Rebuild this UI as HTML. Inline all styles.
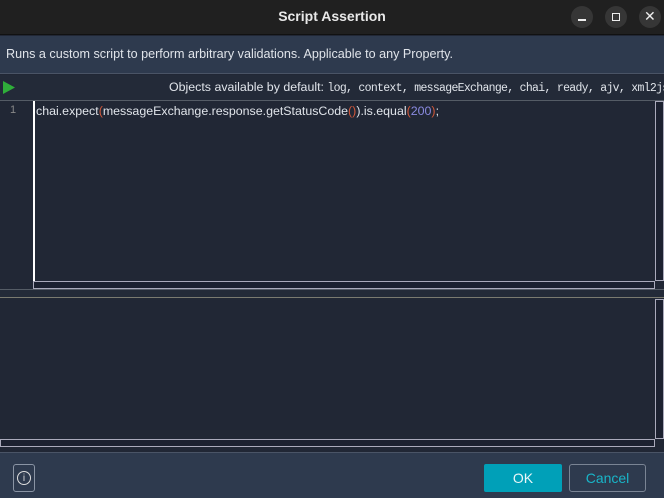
<!DOCTYPE html><html><head><style>
body{margin:0;width:664px;height:498px;overflow:hidden;background:#212735;font-family:"Liberation Sans",sans-serif;position:relative}
div{position:absolute;box-sizing:border-box}
.mono{font-family:"Liberation Mono",monospace}
</style></head><body>
<div style="left:0;top:0;width:664px;height:35px;background:#202020;border-bottom:1px solid #111"></div>
<div style="left:0;top:8px;width:664px;text-align:center;color:#e8e8e8;font-weight:bold;font-size:14px">Script Assertion</div>
<div style="left:571px;top:6px;width:22px;height:22px;border-radius:50%;background:#363636"></div>
<div style="left:605px;top:6px;width:22px;height:22px;border-radius:50%;background:#363636"></div>
<div style="left:639px;top:6px;width:22px;height:22px;border-radius:50%;background:#363636"></div>
<div style="left:578px;top:19px;width:8px;height:1.5px;background:#eee"></div>
<div style="left:612px;top:13px;width:8px;height:8px;border:1.5px solid #eee"></div>
<div style="left:644px;top:8px;color:#eee;font-size:14px">✕</div>
<div style="left:0;top:36px;width:664px;height:38px;background:#2e3a4e;border-bottom:1px solid #4a5466"></div>
<div style="left:6px;top:47px;color:#e0e4ea;font-size:12.6px;white-space:nowrap">Runs a custom script to perform arbitrary validations. Applicable to any Property.</div>
<div style="left:0;top:75px;width:664px;height:26px;background:#232a38;border-bottom:1px solid #555c66"></div>
<svg style="position:absolute;left:2px;top:80px" width="14" height="15"><path d="M1 1L13 7.5L1 14Z" fill="#2fae3a"/></svg>
<div style="left:169px;top:80px;width:495px;overflow:hidden;color:#e0e4ea;font-size:12.4px;white-space:nowrap">Objects available by default: <span class="mono" style="font-size:11.5px;letter-spacing:-0.7px">log, context, messageExchange, chai, ready, ajv, xml2js</span></div>
<div style="left:10px;top:104px;color:#888;font-size:11px">1</div>
<div style="left:33px;top:101px;width:2px;height:181px;background:#fff"></div>
<div style="left:36px;top:104px;color:#e0e4ea;font-size:12.4px;white-space:nowrap">chai.expect<span style="color:#d2583a">(</span>messageExchange.response.getStatusCode<span style="color:#d2583a">()</span>).is.equal<span style="color:#d2583a">(</span><span style="color:#8a8ae0">200</span><span style="color:#d2583a">)</span>;</div>
<div style="left:655px;top:101px;width:9px;height:180px;border:1px solid #aab;background:#1c2130"></div>
<div style="left:33px;top:281px;width:622px;height:8px;border:1px solid #aab;background:#1c2130"></div>
<div style="left:0;top:289px;width:664px;height:9px;background:#232a38;border-top:1px solid #555c66;border-bottom:1px solid #7a7a70"></div>
<div style="left:655px;top:299px;width:9px;height:140px;border:1px solid #aab;background:#1c2130"></div>
<div style="left:0;top:439px;width:655px;height:8px;border:1px solid #aab;background:#1c2130"></div>
<div style="left:0;top:452px;width:664px;height:46px;background:#2e3a4e;border-top:1px solid #4a5466"></div>
<div style="left:13px;top:464px;width:22px;height:28px;border:1px solid #8a94a4;border-radius:3px"></div>
<div style="left:17px;top:471px;width:14px;height:14px;border:1px solid #ddd;border-radius:50%;color:#ddd;font-size:10px;text-align:center;line-height:13px">i</div>
<div style="left:484px;top:464px;width:78px;height:28px;background:#00a0b8;border-radius:2px;color:#eaf6f8;font-size:14px;text-align:center;line-height:28px">OK</div>
<div style="left:569px;top:464px;width:77px;height:28px;border:1px solid #7a8494;border-radius:3px;color:#19b5c8;font-size:14px;text-align:center;line-height:26px">Cancel</div>
</body></html>
